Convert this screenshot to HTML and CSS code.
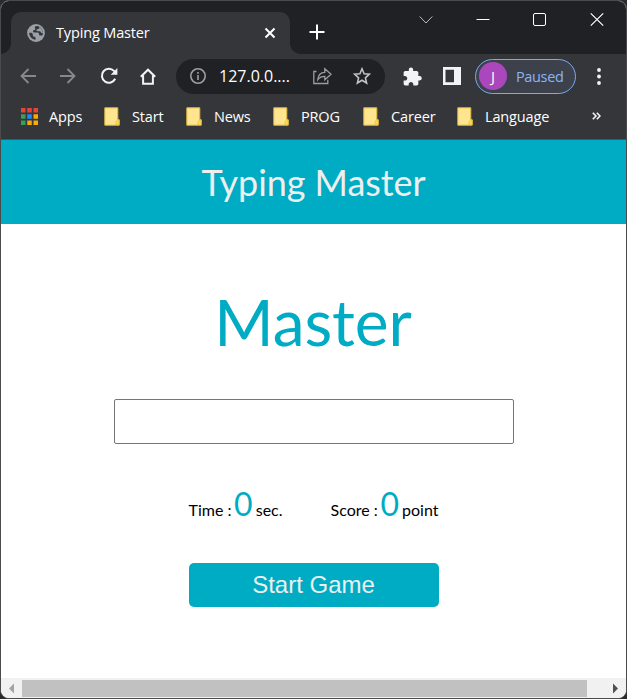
FILE: index.html
```html
<!DOCTYPE html>
<html lang="en">
<head>
<meta charset="utf-8">
<title>Typing Master</title>
<link rel="stylesheet" href="styles.css">
</head>
<body>
<svg class="defs" width="0" height="0" aria-hidden="true">
  <symbol id="note" viewBox="0 0 16 19">
    <path d="M.8.8h13v12h1.400v5.400H.8z" fill="#ffe58f" stroke="#e0b93c" stroke-width="1"/>
    <path d="M12 17.700V14.500l1.800-1.700h1.300v4.900z" fill="#ffd95a" stroke="#e8bd32" stroke-width=".7"/>
  </symbol>
</svg>
<div class="window">
  <div class="tabstrip">
    <div class="tab">
      <svg class="globe" width="18" height="18" viewBox="0 0 18 18"><circle cx="9" cy="9" r="8.900" fill="#9aa0a6"/><path d="M9.500 2C8 2.200 7.500 3.200 8 4.200c.5 1 .2 1.700-.8 1.900-1.200.2-1.500 1-1 1.800.4.700 1.300.6 2.300.6h2c1 0 1.500.8 1.500 1.700s.6 1.300 1.500 1.300h1c.8 0 1.100-.4 1.300-1.100C16.500 6 13.800 2.400 9.500 2z" fill="#35363a"/><path d="M12 2.900c.6 1.300-.1 2.300-1.300 2.300-1 0-1.200.5-1.200 1.100 0 .7.600.9 1.400.9h1.500c1.100 0 1.500.7 1.700 1.500l1.800.5c-.2-2.900-1.700-5.300-3.900-6.300z" fill="#9aa0a6"/><path d="M2.200 8.800c-.1 3.600 2.700 6.700 6.400 7v-1.600c0-1-.6-1.500-1.400-1.500-.9 0-1.400-.6-1.400-1.400V10.500c0-1-.8-1.600-1.700-1.700z" fill="#35363a"/></svg>
      <span class="tab-title">Typing Master</span>
      <svg class="tab-close" width="12" height="12" viewBox="0 0 12 12"><path d="M1.500 1.500l9 9m0-9l-9 9" stroke="#fff" stroke-width="2"/></svg>
    </div>
    <svg class="new-tab" width="16" height="16" viewBox="0 0 16 16"><path d="M8 .5v15M.5 8h15" stroke="#fff" stroke-width="2"/></svg>
    <div class="controls">
      <svg width="14" height="40" viewBox="0 0 14 40"><path d="M.7 15.500l6.300 6.500 6.300-6.500" fill="none" stroke="#bdbdbe" stroke-width="1"/></svg>
      <svg width="14" height="40" viewBox="0 0 14 40"><path d="M.5 18.500h13" stroke="#fff"/></svg>
      <svg width="14" height="40" viewBox="0 0 14 40"><rect x=".5" y="12.500" width="12" height="12" rx="1.500" fill="none" stroke="#fff"/></svg>
      <svg width="14" height="40" viewBox="0 0 14 40"><path d="M.8 12.300l12.400 12.400m0-12.400L.8 24.700" stroke="#fff" stroke-width="1.200"/></svg>
    </div>
  </div>
  <div class="toolbar">
    <svg class="back" width="16" height="16" viewBox="0 0 16 16"><path d="M16 8H1.500M8.500 1L1.500 8l7 7" fill="none" stroke="#87888b" stroke-width="1.800"/></svg>
    <svg class="forward" width="16" height="16" viewBox="0 0 16 16"><path d="M0 8h14.500M7.500 1l7 7-7 7" fill="none" stroke="#87888b" stroke-width="1.800"/></svg>
    <svg class="reload" width="18" height="18" viewBox="0 0 18 18"><path d="M15.200 11.800A7 7 0 1 1 14 3.900l1.500 1.600" fill="none" stroke="#f1f3f4" stroke-width="2"/><path d="M17.400 1v6.700h-6.700z" fill="#f1f3f4"/></svg>
    <svg class="home" width="16" height="17" viewBox="0 0 16 17"><path d="M.8 8.700L8 1.700l7.200 7M3.100 7.600v8.200h9.800V7.600" fill="none" stroke="#f1f3f4" stroke-width="2"/></svg>
    <div class="omnibox">
      <svg class="info" width="16" height="16" viewBox="0 0 16 16"><circle cx="8" cy="8" r="7.200" fill="none" stroke="#9aa0a6" stroke-width="1.600"/><path d="M8 7v5M8 4v1.700" stroke="#9aa0a6" stroke-width="1.600"/></svg>
      <span class="url">127.0.0....</span>
      <svg class="share" width="19" height="18" viewBox="0 0 19 18"><path d="M3.500 4.500H.8v12h14v-3.800" fill="none" stroke="#9b9c9f" stroke-width="1.300"/><path d="M4.800 12.500c.4-4.500 3-7 7-7.200V1.800l6.200 5.500-6.200 5.400V9.300c-3.200 0-5.300 1-7 3.200z" fill="none" stroke="#9b9c9f" stroke-width="1.300"/></svg>
      <svg class="star" width="18" height="18" viewBox="0 0 18 18"><path d="M9 1.800l2.100 4.900 5.300.5-4 3.600 1.200 5.200L9 13.200 4.400 16l1.200-5.200-4-3.600 5.300-.5z" fill="none" stroke="#bdc1c6" stroke-width="1.600"/></svg>
    </div>
    <svg class="puzzle" width="19" height="19" viewBox="1.500 .5 21.500 22"><path d="M20.500 11H19V7c0-1.100-.9-2-2-2h-4V3.500a2.500 2.500 0 0 0-5 0V5H4c-1.100 0-2 .9-2 2v3.800h1.500c1.500 0 2.700 1.200 2.700 2.700S5 16.200 3.500 16.200H2V20c0 1.100.9 2 2 2h3.800v-1.500c0-1.500 1.200-2.700 2.700-2.700s2.700 1.200 2.700 2.700V22H17c1.100 0 2-.9 2-2v-4h1.500a2.500 2.500 0 0 0 0-5z" fill="#f1f3f4"/></svg>
    <svg class="panel" width="18" height="18" viewBox="0 0 18 18"><path fill-rule="evenodd" d="M0 0h18v18H0zM2.500 2.800v12.400h8.500V2.800z" fill="#f1f3f4"/></svg>
    <div class="profile"><span class="avatar">J</span><span class="paused">Paused</span></div>
    <svg class="menu" width="4" height="17" viewBox="0 0 4 17"><g fill="#f1f3f4"><circle cx="2" cy="2" r="1.900"/><circle cx="2" cy="8.500" r="1.900"/><circle cx="2" cy="15" r="1.900"/></g></svg>
  </div>
  <div class="bookmarks">
    <div class="mark mark-apps"><svg width="17" height="17" viewBox="0 0 17 17"><path d="M0 0h4.500v4.500H0zM6.250 0h4.500v4.500h-4.500zM12.500 0H17v4.500h-4.500z" fill="#ea4335"/><path d="M0 6.250h4.500v4.500H0zM0 12.500h4.500V17H0z" fill="#34a060"/><path d="M6.250 6.250h4.500v4.500h-4.500z" fill="#1a8cff"/><path d="M12.500 6.250H17v4.500h-4.500zM6.250 12.500h4.500V17h-4.500zM12.500 12.500H17V17h-4.500z" fill="#f9ab00"/></svg><span>Apps</span></div>
    <div class="mark mark-start"><svg width="16" height="19"><use href="#note"/></svg><span>Start</span></div>
    <div class="mark mark-news"><svg width="16" height="19"><use href="#note"/></svg><span>News</span></div>
    <div class="mark mark-prog"><svg width="16" height="19"><use href="#note"/></svg><span>PROG</span></div>
    <div class="mark mark-career"><svg width="16" height="19"><use href="#note"/></svg><span>Career</span></div>
    <div class="mark mark-language"><svg width="16" height="19"><use href="#note"/></svg><span>Language</span></div>
    <svg class="more" width="9" height="8" viewBox="0 0 9 8"><path d="M.8.7L4 4 .8 7.300M4.800.7L8 4 4.800 7.300" fill="none" stroke="#f1f3f4" stroke-width="1.600"/></svg>
  </div>
  <header class="header">Typing Master</header>
  <main class="game">
    <div class="word">Master</div>
    <input class="word-input" type="text" aria-label="Word">
    <div class="stats">
      <div class="time">Time : <span class="count">0</span> sec.</div>
      <div class="score">Score : <span class="count">0</span> point</div>
    </div>
    <button class="start">Start Game</button>
  </main>
  <div class="scrollbar">
    <svg width="21" height="20" viewBox="0 0 21 20"><path d="M13 5.500v10L8 10.500z" fill="#a3a3a3"/></svg>
    <div class="thumb"></div>
    <svg class="scroll-right" width="39" height="20" viewBox="0 0 39 20"><path d="M26 5.500v10l5-5z" fill="#505050"/></svg>
  </div>
</div>
</body>
</html>
```
FILE: styles.css
```css
* { box-sizing: border-box; }
body { margin: 0; background: #2b2a2d; overflow: hidden; }
svg { display: block; flex: none; }
.defs { position: absolute; }
.window {
  width: 627px; height: 699px;
  display: flex; flex-direction: column;
  border: 1px solid #4b4b4d; border-radius: 9px;
  overflow: hidden; background: #fff;
  font-family: "Open Sans", "Noto Sans", sans-serif;
  font-size: 14.5px; letter-spacing: -.15px; color: #fff;
}
.tabstrip { height: 53px; flex: none; display: flex; background: #202124; }
.tab {
  position: relative;
  width: 279px; height: 42px; margin: 11px 0 0 10px; padding: 0 14px 1px 16px;
  display: flex; align-items: center;
  background: #35363a; border-radius: 10px 10px 0 0;
}
.tab::before, .tab::after { content: ""; position: absolute; bottom: 0; width: 10px; height: 10px; }
.tab::before { left: -10px; background: radial-gradient(circle at 0 0, #202124 9.5px, #35363a 10px); }
.tab::after { right: -10px; background: radial-gradient(circle at 100% 0, #202124 9.5px, #35363a 10px); }
.tab-title { margin-left: 11px; white-space: nowrap; }
.tab-close { margin-left: auto; }
.new-tab { margin: 23px 0 0 19px; }
.controls { margin: 0 22px 0 auto; display: flex; gap: 43px; }
.toolbar { height: 44px; flex: none; display: flex; align-items: center; padding: 0 25px 0 19px; background: #35363a; }
.forward { margin-left: 24px; }
.reload { margin-left: 24px; }
.home { margin-left: 22px; }
.omnibox { width: 209px; height: 35px; margin-left: 20px; padding: 0 14px; display: flex; align-items: center; border-radius: 18px; background: #202124; }
.url { margin-left: 13px; white-space: nowrap; font-size: 16px; letter-spacing: 0; }
.share { margin-left: auto; }
.star { margin-left: 21px; }
.puzzle { margin-left: 18px; }
.panel { margin-left: 21px; }
.profile { width: 101px; height: 35px; margin-left: 14px; padding-left: 3px; display: flex; align-items: center; border: 1px solid #7baaf0; border-radius: 18px; background: #3d414b; color: #8ab4f8; }
.avatar { width: 28px; height: 28px; flex: none; border-radius: 50%; background: #ab47bc; color: #fff; text-align: center; line-height: 28px; font-size: 15px; }
.paused { margin-left: 9px; letter-spacing: -.35px; }
.menu { margin-left: auto; }
.bookmarks { height: 42px; flex: none; display: flex; align-items: center; padding: 0 25px 5px 20px; background: #35363a; border-bottom: 1px solid #505356; }
.mark { display: flex; align-items: center; white-space: nowrap; }
.mark span { margin-left: 12px; }
.mark-apps { width: 83px; }
.mark-apps span { margin-left: 11px; }
.mark-start { width: 82px; }
.mark-news { width: 87px; }
.mark-prog { width: 90px; }
.mark-career { width: 94px; }
.more { margin-left: auto; }
.header { height: 84px; flex: none; background: #00acc4; color: #eee; text-align: center; letter-spacing: -.06px; font: 36px/84px Lato, sans-serif; }
.game { flex: 1; display: flex; flex-direction: column; align-items: center; letter-spacing: 0; color: #000; font: 16px Lato, sans-serif; }
.word { margin: 62px 1px 0 0; color: #00acc4; font-size: 64px; line-height: 72px; letter-spacing: -.1px; }
.word-input { width: 400px; height: 45px; margin: 41px 0 0 1px; border: 1px solid #767676; border-radius: 2px; outline: 0; background: #fff; }
.stats { width: 250px; height: 48px; margin-top: 36px; display: flex; justify-content: space-between; white-space: nowrap; line-height: 48px; }
.count { margin: 0 -1px 0 -1.5px; color: #00acc4; font-size: 32px; }
.start { width: 250px; height: 44px; margin-top: 35px; padding: 0; border: 0; border-radius: 5px; background: #00acc4; color: #eee; font: 24px "Liberation Sans", sans-serif; }
.scrollbar { height: 20px; flex: none; display: flex; background: #f1f1f1; }
.thumb { flex: 1; margin: 2px 0 1px; background: #c1c1c1; }
```
